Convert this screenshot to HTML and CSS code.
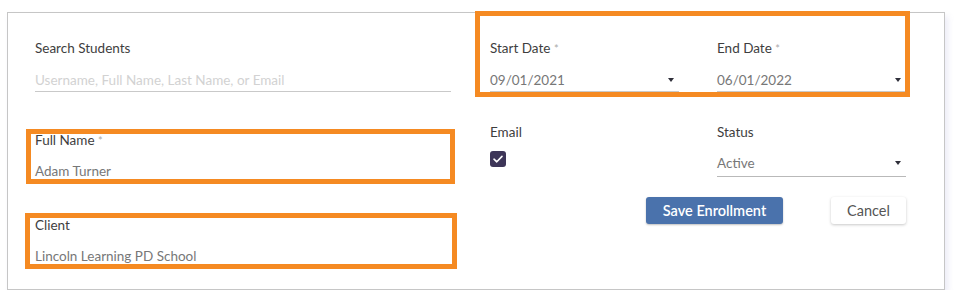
FILE: index.html
```html
<!DOCTYPE html>
<html lang="en">
<head>
    <meta charset="UTF-8">
    <meta name="viewport" content="width=device-width, initial-scale=1.0">
    <title>Edit Enrollment</title>
    <link rel="stylesheet" href="styles.css">
</head>
<body>

    <div class="card">
        <div class="form-grid">
            <!-- Left column -->
            <div class="col">
                <div class="field field-search">
                    <label class="field-label">Search Students</label>
                    <div class="field-input">
                        <span class="placeholder">Username, Full Name, Last Name, or Email</span>
                    </div>
                </div>

                <div class="field field-readonly field-name highlight hl-name">
                    <label class="field-label">Full Name <span class="req">*</span></label>
                    <div class="field-input">Adam Turner</div>
                </div>

                <div class="field field-readonly field-client highlight hl-client">
                    <label class="field-label">Client</label>
                    <div class="field-input">Lincoln Learning PD School</div>
                </div>
            </div>

            <!-- Right column -->
            <div class="col">
                <div class="pair highlight hl-dates">
                    <div class="field">
                        <label class="field-label">Start Date <span class="req">*</span></label>
                        <div class="field-input select">09/01/2021 <span class="caret"></span></div>
                    </div>
                    <div class="field">
                        <label class="field-label">End Date <span class="req">*</span></label>
                        <div class="field-input select">06/01/2022 <span class="caret"></span></div>
                    </div>
                </div>

                <div class="pair pair-second">
                    <div class="field">
                        <label class="field-label">Email</label>
                        <div class="checkbox">
                            <svg width="16" height="16" viewBox="0 0 16 16">
                                <path d="M4 8.2 L6.8 10.8 L12 5.4" fill="none" stroke="#fff" stroke-width="1.6" stroke-linecap="round" stroke-linejoin="round"/>
                            </svg>
                        </div>
                    </div>
                    <div class="field">
                        <label class="field-label">Status</label>
                        <div class="field-input select status">Active <span class="caret"></span></div>
                    </div>
                </div>

                <div class="actions">
                    <button type="button" class="btn btn-primary">Save Enrollment</button>
                    <button type="button" class="btn btn-default">Cancel</button>
                </div>
            </div>
        </div>
    </div>

</body>
</html>
```

FILE: styles.css
```css
/* General Styles */
* {
    margin: 0;
    padding: 0;
    box-sizing: border-box;
}

body {
    font-family: 'Lato', 'Open Sans', sans-serif;
    background: #fff;
    padding: 12px 0 0 7px;
    color: #3e3e3e;
}

/* Card */
.card {
    width: 938px;
    height: 278px;
    border: 1px solid #c6c6c6;
    background: #fff;
    box-shadow: 3px 4px 6px rgba(150, 150, 210, 0.18);
    padding: 27px 37px 0 27px;
}

.form-grid {
    display: grid;
    grid-template-columns: 416px 416px;
    column-gap: 39px;
}

/* Fields */
.field {
    display: flex;
    flex-direction: column;
}

.field-label {
    font-size: 13.5px;
    line-height: 16px;
    height: 16px;
    color: #3e3e3e;
}

.req {
    color: #aaa;
    font-size: 11px;
}

.field-input {
    margin-top: 12px;
    height: 24px;
    font-size: 13.5px;
    line-height: 24px;
    color: #777;
    border-bottom: 1px solid #c9c9c9;
    position: relative;
}

.placeholder {
    color: #d2d2d2;
}

.field-readonly .field-input {
    margin-top: 11px;
    height: 25px;
    line-height: 24px;
    border-bottom: 1px dotted #cfcfcf;
}

.field-name {
    margin-top: 40px;
}

.field-client {
    margin-top: 33px;
}

/* Selects */
.caret {
    position: absolute;
    right: 5px;
    top: 10px;
    width: 0;
    height: 0;
    border-left: 3.5px solid transparent;
    border-right: 3.5px solid transparent;
    border-top: 4px solid #2f2f3a;
}

.pair {
    display: grid;
    grid-template-columns: 1fr 1fr;
    column-gap: 38px;
}

.pair-second {
    margin-top: 32px;
}

.status {
    margin-top: 11px;
    height: 26px;
    line-height: 25px;
    border-bottom-color: #b9b9b9;
}

.checkbox {
    margin-top: 11px;
    width: 16px;
    height: 16px;
    border-radius: 3px;
    background: #3d3558;
}

.checkbox svg {
    display: block;
}

/* Buttons */
.actions {
    display: flex;
    justify-content: flex-end;
    gap: 48px;
    margin-top: 20px;
}

.btn {
    height: 27px;
    font-family: inherit;
    font-size: 14.5px;
    border: none;
    border-radius: 3px;
    cursor: pointer;
}

.btn-primary {
    width: 137px;
    background: #4a72ac;
    color: #fff;
    font-weight: 600;
    box-shadow: 0 1px 2px rgba(0, 0, 0, 0.25);
}

.btn-default {
    width: 75px;
    background: #fff;
    color: #555;
    box-shadow: 0 1px 3px rgba(0, 0, 0, 0.22);
}

/* Orange highlight boxes */
.highlight {
    position: relative;
}

.highlight::after {
    content: "";
    position: absolute;
    border: 5px solid #f58a22;
    pointer-events: none;
}

.hl-dates::after {
    left: -15px;
    right: -4px;
    top: -29px;
    bottom: -5px;
}

.hl-name::after {
    left: -9px;
    right: -4px;
    top: -3px;
    bottom: 0;
}

.hl-client::after {
    left: -10px;
    right: -6px;
    top: -4px;
    bottom: 0;
}
```
